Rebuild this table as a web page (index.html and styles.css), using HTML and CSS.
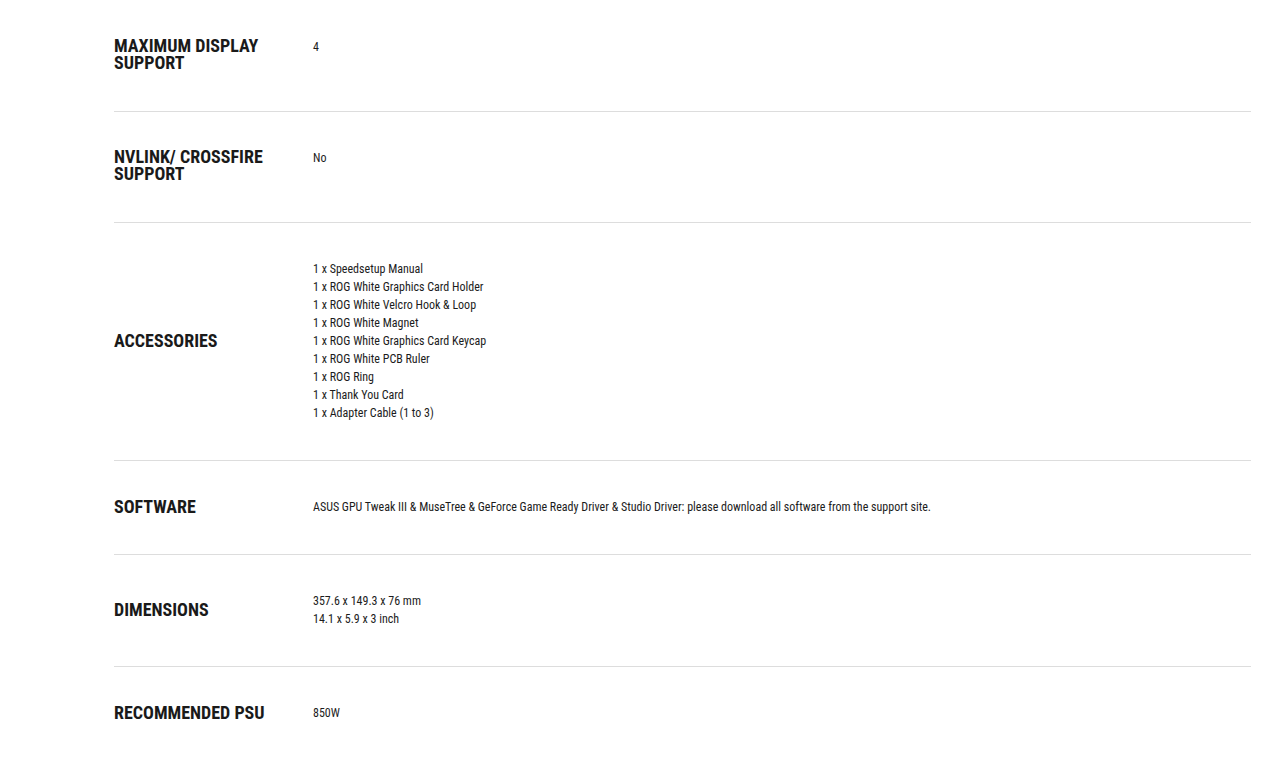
FILE: index.html
```html
<!DOCTYPE html>
<html lang="en">
<head>
<meta charset="utf-8">
<title>Specifications</title>
<link rel="stylesheet" href="styles.css">
</head>
<body>
<div class="specs">
  <div class="row top">
    <div class="label">Maximum Display<br>Support</div>
    <div class="value">4</div>
  </div>
  <div class="row top">
    <div class="label">NVlink/ Crossfire<br>Support</div>
    <div class="value">No</div>
  </div>
  <div class="row">
    <div class="label">Accessories</div>
    <div class="value">
      1 x Speedsetup Manual<br>
      1 x ROG White Graphics Card Holder<br>
      1 x ROG White Velcro Hook &amp; Loop<br>
      1 x ROG White Magnet<br>
      1 x ROG White Graphics Card Keycap<br>
      1 x ROG White PCB Ruler<br>
      1 x ROG Ring<br>
      1 x Thank You Card<br>
      1 x Adapter Cable (1 to 3)
    </div>
  </div>
  <div class="row">
    <div class="label">Software</div>
    <div class="value">ASUS GPU Tweak III &amp; MuseTree &amp; GeForce Game Ready Driver &amp; Studio Driver: please download all software from the support site.</div>
  </div>
  <div class="row">
    <div class="label">Dimensions</div>
    <div class="value">357.6 x 149.3 x 76 mm<br>14.1 x 5.9 x 3 inch</div>
  </div>
  <div class="row">
    <div class="label">Recommended PSU</div>
    <div class="value">850W</div>
  </div>
</div>
</body>
</html>
```
FILE: styles.css
```css
html, body {
  margin: 0;
  padding: 0;
  background: #ffffff;
}
body {
  font-family: "Roboto Condensed", Roboto, "Liberation Sans Narrow", "DejaVu Sans Condensed", sans-serif;
  font-stretch: 75%;
  color: #1c1c1c;
}
.specs {
  padding: 0 22px 0 114px;
}
.row {
  display: grid;
  grid-template-columns: 199px 1fr;
  align-items: center;
  padding: 37px 0 38px;
  border-top: 1px solid #dddddd;
}
.row:first-child {
  border-top-color: transparent;
}
.row.top {
  align-items: start;
}
.label {
  font-size: 18px;
  line-height: 17.5px;
  font-weight: 700;
  text-transform: uppercase;
  letter-spacing: 0;
  color: #1a1a1a;
}
.row.top .label {
  line-height: 17px;
  margin: -1px 0 2px;
}
.value {
  font-size: 12px;
  line-height: 18px;
  color: #1c1c1c;
}
```
